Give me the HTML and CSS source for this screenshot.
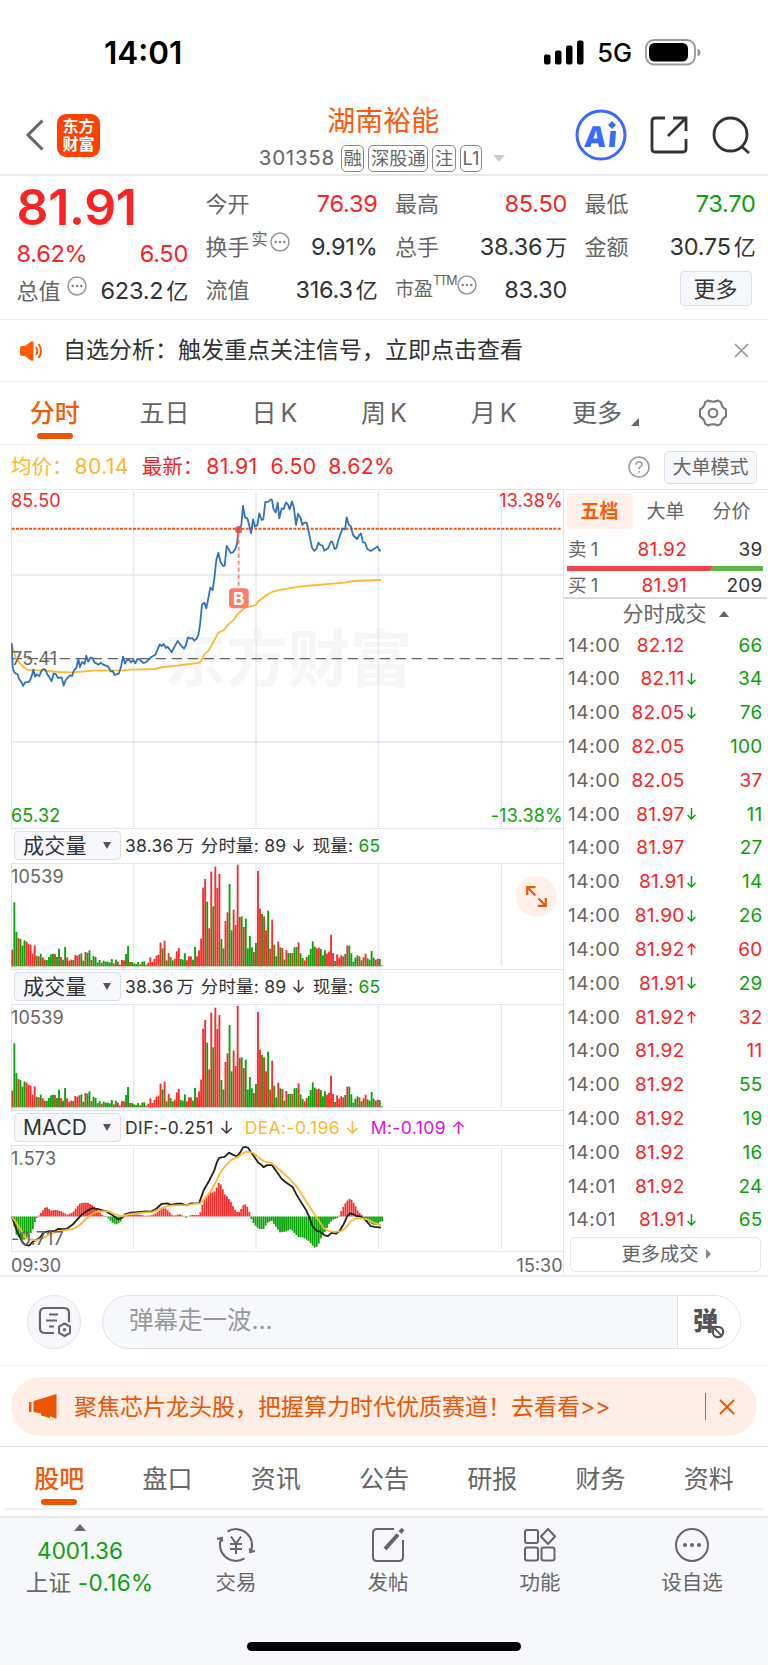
FILE: index.html
```html
<!DOCTYPE html>
<html lang="zh-CN">
<head>
    <meta charset="UTF-8">
    <meta name="viewport" content="width=device-width, initial-scale=1.0">
    <title>湖南裕能 301358</title>
    <link rel="stylesheet" href="styles.css">
</head>
<body>
    <div class="status-bar">
        <span class="clock">14:01</span>
        <div class="status-icons">
            <svg width="40" height="25" viewBox="0 0 40 25">
                <rect x="0" y="14.5" width="6.5" height="10" rx="2"/>
                <rect x="11" y="10.5" width="6.5" height="14" rx="2"/>
                <rect x="22" y="5.5" width="6.5" height="19" rx="2"/>
                <rect x="33" y="0.5" width="6.5" height="24" rx="2"/>
            </svg>
            <span class="network">5G</span>
            <svg width="56" height="27" viewBox="0 0 56 27">
                <rect x="1" y="1" width="49" height="24.500" rx="8" fill="none" stroke="#999" stroke-width="1.800"/>
                <rect x="4" y="4" width="39" height="18.500" rx="5.500"/>
                <path d="M52.500 9.500q3 1 3 4t-3 4z" fill="#999"/>
            </svg>
        </div>
    </div>

    <header class="header">
        <svg class="back" width="20" height="32" viewBox="0 0 20 32"><path d="M17.500 1.500 3 16l14.500 14.500" fill="none" stroke="#666" stroke-width="3"/></svg>
        <div class="logo"><span>东方</span><span>财富</span></div>
        <div class="title">
            <h1>湖南裕能</h1>
            <div class="subtitle">
                <span class="code">301358</span>
                <span class="tag">融</span><span class="tag">深股通</span><span class="tag">注</span><span class="tag">L1</span>
                <i class="tri-down"></i>
            </div>
        </div>
        <div class="ai">
            <svg width="52" height="52" viewBox="0 0 52 52">
                <circle cx="26" cy="26" r="24" fill="none" stroke="#3a6bff" stroke-width="3"/>
                <path d="M37 12l4 4-4 4-4-4z" fill="#3a6bff"/>
            </svg>
            <span class="ai-text">Aı</span>
        </div>
        <svg class="share" width="38" height="38" viewBox="0 0 38 38" fill="none" stroke="#333" stroke-width="2.800">
            <path d="M15 2H5Q2 2 2 5v28q0 3 3 3h28q3 0 3-3V23M23 2h13v13M36 2 18 20"/>
        </svg>
        <svg class="search" width="38" height="38" viewBox="0 0 38 38" fill="none" stroke="#333" stroke-width="2.800">
            <circle cx="18.500" cy="18.500" r="16.500"/><path d="M29 30l8 7"/>
        </svg>
    </header>

    <section class="quote">
        <div class="quote-col">
            <div class="big-price">81.91</div>
            <div class="row change red"><span>8.62%</span><span>6.50</span></div>
            <div class="row"><label>总值<svg class="dots up" viewBox="0 0 20 20"><use href="#dots"/></svg></label><span>623.2<em>亿</em></span></div>
        </div>
        <div class="quote-col">
            <div class="row"><label>今开</label><span class="red">76.39</span></div>
            <div class="row"><label>换手<sup>实</sup><svg class="dots" viewBox="0 0 20 20"><use href="#dots"/></svg></label><span>9.91%</span></div>
            <div class="row"><label>流值</label><span>316.3<em>亿</em></span></div>
        </div>
        <div class="quote-col">
            <div class="row"><label>最高</label><span class="red">85.50</span></div>
            <div class="row"><label>总手</label><span>38.36<em>万</em></span></div>
            <div class="row"><label class="pe">市盈<sup>TTM</sup><svg class="dots" viewBox="0 0 20 20"><use href="#dots"/></svg></label><span>83.30</span></div>
        </div>
        <div class="quote-col">
            <div class="row"><label>最低</label><span class="green">73.70</span></div>
            <div class="row"><label>金额</label><span>30.75<em>亿</em></span></div>
            <div class="row end"><button class="more-btn">更多</button></div>
        </div>
    </section>

    <section class="notice">
        <svg width="25" height="20" viewBox="0 0 25 20">
            <path d="M2 5h3l6-4.500q2.500-1 2.500 1.500v16q0 2.500-2.500 1.500L5 15H2q-2 0-2-2V7q0-2 2-2z" fill="#ff5a0a"/>
            <path d="M16 6q2.500 4 0 8M18.500 3q5 7 0 14" fill="none" stroke="#ff5a0a" stroke-width="2"/>
        </svg>
        <p>自选分析：触发重点关注信号，立即点击查看</p>
        <svg width="15" height="15" viewBox="0 0 15 15"><path d="M1 1l13 13M14 1L1 14" stroke="#999" stroke-width="1.700"/></svg>
    </section>

    <nav class="period-tabs">
        <a class="active">分时</a>
        <a>五日</a>
        <a>日<b>K</b></a>
        <a>周<b>K</b></a>
        <a>月<b>K</b></a>
        <a class="more">更多<i class="corner"></i></a>
        <a><svg width="30" height="30" viewBox="0 0 30 30" fill="none" stroke="#777" stroke-width="2">
            <path d="M10 2.500q5 2.500 10 0l3 1.800q.5 5 5 7.200v7q-4.500 2.200-5 7.200l-3 1.800q-5-2.500-10 0l-3-1.800q-.5-5-5-7.200v-7q4.500-2.200 5-7.200z" stroke-linejoin="round"/><circle cx="15" cy="15" r="4.300"/>
        </svg></a>
    </nav>

    <section class="info">
        <span class="yellow">均价：</span><span class="yellow v1">80.14</span>
        <span class="red">最新：</span><span class="red v2">81.91</span><span class="red v3">6.50</span><span class="red">8.62%</span>
        <svg class="help" width="22" height="22" viewBox="0 0 22 22" fill="none" stroke="#999" stroke-width="1.500">
            <circle cx="11" cy="11" r="10"/><path d="M8 8.800q0-3 3-3t3 2.600q0 1.500-1.700 2.500T11 13.500"/><path d="M11 15v1.800"/>
        </svg>
        <button class="mode-btn">大单模式</button>
    </section>

    <main class="trade">
        <div class="charts">
            <div class="price-chart">
                <svg viewBox="33 27 1656 1017" width="552" height="339">
                    <text class="watermark" x="492" y="606">东方财富</text>
                    <g class="grid">
                        <path d="M401 33V1040M768 33V1040M1135 33V1040M1504 33V1040M35 285H1689M35 786H1689"/>
                    </g>
                    <path d="M35 536H1689" class="mid-line"/>
                    <path d="M35 146H1686" class="last-line"/>
                    <polyline id="avg" class="line-avg"/>
                    <polyline id="price" class="line-price"/>
                    <path d="M716 158V325" class="mark-line"/>
                    <circle cx="716" cy="149" r="11" fill="#e8483c" opacity=".85"/>
                    <rect x="687" y="325" width="59" height="60" rx="12" fill="#ff7b6b"/>
                    <text class="mark" x="716.500" y="375">B</text>
                </svg>
                <span class="lab tl red">85.50</span>
                <span class="lab tr red">13.38%</span>
                <span class="lab ml">75.41</span>
                <span class="lab bl green">65.32</span>
                <span class="lab br green">-13.38%</span>
            </div>

            <div class="sub-head">
                <div class="select">成交量<i class="tri-down dark"></i></div>
                <span>38.36<em>万</em></span><span>分时量: 89 ↓</span><span>现量: <b class="green">65</b></span>
            </div>
            <div class="sub-chart">
                <svg class="volume" viewBox="33 116 1656 315" width="552" height="105"></svg>
                <span class="lab tl gray">10539</span>
                <div class="expand"><svg width="21" height="21" viewBox="0 0 21 21" fill="none" stroke="#f0590c" stroke-width="2.200">
                    <path d="M1.200 9V1.200H9.500M1.500 1.500l8 8M19.800 12v7.800h-8M19.500 19.500l-7-7"/>
                </svg></div>
            </div>

            <div class="sub-head">
                <div class="select">成交量<i class="tri-down dark"></i></div>
                <span>38.36<em>万</em></span><span>分时量: 89 ↓</span><span>现量: <b class="green">65</b></span>
            </div>
            <div class="sub-chart">
                <svg class="volume" viewBox="33 116 1656 315" width="552" height="105"></svg>
                <span class="lab tl gray">10539</span>
            </div>

            <div class="sub-head macd-head">
                <div class="select">MACD<i class="tri-down dark"></i></div>
                <span>DIF:-0.251 ↓</span><span class="yellow">DEA:-0.196 ↓</span><span class="purple">M:-0.109 ↑</span>
            </div>
            <div class="sub-chart">
                <svg class="macd" viewBox="30.300 119 1518.500 318" width="552" height="105" preserveAspectRatio="none">
                    <path class="grid" d="M367.500 126V432M704.500 126V432M1041.500 126V432M1379.500 126V432"/>
                    <g id="hist"></g>
                    <polyline id="dif" class="line-dif"/>
                    <polyline id="dea" class="line-dea"/>
                </svg>
                <span class="lab tl gray">1.573</span>
                <span class="lab bl gray">-0.717</span>
            </div>
            <div class="times"><span>09:30</span><span>15:30</span></div>
        </div>

        <aside class="book">
            <div class="book-tabs"><a class="active">五档</a><a>大单</a><a>分价</a></div>
            <div class="level sell"><span>卖<b>1</b></span><span class="red">81.92</span><span>39</span></div>
            <svg class="ratio" width="196" height="5" viewBox="0 0 196 5"><path d="M0 0H147L143 5H0z" fill="#ec4448"/><path d="M147 0h49v5h-53z" fill="#5cb946"/></svg>
            <div class="level buy"><span>买<b>1</b></span><span class="red">81.91</span><span>209</span></div>
            <div class="ticks-title">分时成交<i class="tri-up"></i></div>
            <div id="ticks"></div>
            <button class="more-ticks">更多成交<i class="tri-right"></i></button>
        </aside>
    </main>

    <section class="danmu">
        <div class="danmu-set">
            <svg width="34" height="32" viewBox="0 0 34 32" fill="none" stroke="#666" stroke-width="2.200">
                <path d="M16 27H7q-5 0-5-5V7q0-5 5-5h19q5 0 5 5v9"/><path d="M11 8.500h9M8 14.500h11M11 20.500h5"/>
                <path d="M26.500 17.500l5.500 3v6.500l-5.500 3-5.500-3v-6.500z" stroke-width="2"/><circle cx="26.500" cy="23.800" r="1" stroke-width="1.500"/>
            </svg>
        </div>
        <div class="danmu-input">
            <span class="placeholder">弹幕走一波...</span>
            <div class="danmu-toggle">
                <span>弹</span>
                <svg width="14" height="14" viewBox="0 0 14 14"><circle cx="7" cy="7" r="5.200" fill="#fff" stroke="#555" stroke-width="2.200"/><path d="M3.500 3.500l7 7" stroke="#555" stroke-width="2"/></svg>
            </div>
        </div>
    </section>

    <section class="banner-wrap">
        <div class="banner">
            <svg width="28" height="25" viewBox="0 0 28 25" fill="#ec5503"><path d="M0 8h2.500v10H0zM4.500 7 27.500 0v25L24 23.500l-3-1.500v2l-9-2.500v-2L4.500 18z"/></svg>
            <p>聚焦芯片龙头股，把握算力时代优质赛道！去看看&gt;&gt;</p>
            <i class="bar"></i>
            <svg width="16" height="16" viewBox="0 0 16 16"><path d="M1 1l14 14M15 1L1 15" stroke="#ec5503" stroke-width="1.800"/></svg>
        </div>
    </section>

    <nav class="content-tabs">
        <a class="active">股吧</a><a>盘口</a><a>资讯</a><a>公告</a><a>研报</a><a>财务</a><a>资料</a>
    </nav>

    <footer class="bottom-bar">
        <div class="index">
            <i class="tri-up"></i>
            <span class="value green">4001.36</span>
            <span class="name">上证 <b class="green">-0.16%</b></span>
        </div>
        <a>
            <svg width="40" height="36" viewBox="0 0 40 36" fill="none" stroke="#666" stroke-width="2">
                <path d="M11.500 4.600A16 16 0 0 1 34.500 25l4.500-1M34.500 25l-1-3.500M28.500 31.400A16 16 0 0 1 5.500 11L1 12M5.500 11l1 3.500"/>
                <path d="M15 9.500l5 7 5-7M20 16.500v10.500M14 17h12M14 22h12"/>
            </svg>交易
        </a>
        <a>
            <svg width="34" height="36" viewBox="0 0 34 36" fill="none" stroke="#666" stroke-width="2">
                <path d="M23 2H6Q2 2 2 6v24q0 4 4 4h22q4 0 4-4V13"/><path d="M14 22 27 7.500M29 5.500l3-3.500" stroke-width="4"/>
            </svg>发帖
        </a>
        <a>
            <svg width="34" height="36" viewBox="0 0 34 36" fill="none" stroke="#666" stroke-width="2">
                <rect x="2" y="3" width="13" height="13" rx="2"/><rect x="2" y="20.500" width="13" height="13" rx="2"/><rect x="18.500" y="20.500" width="13" height="13" rx="2"/><path d="M25 2l7 7.500-7 7.500-7-7.500z" stroke-linejoin="round"/>
            </svg>功能
        </a>
        <a>
            <svg width="36" height="36" viewBox="0 0 36 36" fill="#666">
                <circle cx="18" cy="18" r="16" fill="none" stroke="#666" stroke-width="2"/><circle cx="11" cy="18" r="2"/><circle cx="18" cy="18" r="2"/><circle cx="25" cy="18" r="2"/>
            </svg>设自选
        </a>
        <div class="home-indicator"></div>
    </footer>

    <svg class="defs" width="0" height="0">
        <symbol id="dots" viewBox="0 0 20 20"><circle cx="10" cy="10" r="9" fill="none" stroke="#999" stroke-width="1.500"/><g fill="#888"><circle cx="5.700" cy="10" r="1.300"/><circle cx="10" cy="10" r="1.300"/><circle cx="14.300" cy="10" r="1.300"/></g></symbol>
    </svg>
    <script src="script.js"></script>
</body>
</html>
```
FILE: styles.css
```css
* {
    box-sizing: border-box;
}
body {
    margin: 0;
    width: 768px;
    height: 1665px;
    overflow: hidden;
    background: #fff;
    color: #333;
    font-family: Inter, "Noto Sans CJK SC", sans-serif;
    font-size: 22px;
    line-height: 1;
}
p, h1 {
    margin: 0;
    font-weight: 400;
}
b, em, i {
    font-style: normal;
    font-weight: 400;
}
svg {
    display: block;
    flex-shrink: 0;
}
button {
    font: inherit;
    padding: 0;
    color: inherit;
}
.defs {
    position: absolute;
}
.red {
    color: #fb2323;
}
.green {
    color: #0aa30a;
}
.yellow {
    color: #ffb92e;
}
.purple {
    color: #e20ee6;
}
.gray {
    color: #666;
}

/* triangles */
.tri-down {
    border: 6.5px solid transparent;
    border-top: 7px solid #ccc;
    border-bottom: 0;
}
.tri-down.dark {
    border-width: 7px 4px 0;
    border-top-color: #555;
}
.tri-up {
    border: 5px solid transparent;
    border-bottom: 6px solid #666;
    border-top: 0;
}
.tri-right {
    border: 5px solid transparent;
    border-left: 5px solid #888;
    border-right: 0;
}

/* status bar and header */
.status-bar {
    height: 96px;
    padding: 9px 67px 0 104px;
    display: flex;
    justify-content: space-between;
    align-items: center;
}
.clock {
    font-size: 31.5px;
    font-weight: 600;
    color: #000;
}
.status-icons {
    display: flex;
    align-items: center;
    gap: 13px;
}
.network {
    font-size: 25.5px;
    font-weight: 500;
    color: #000;
}
.header {
    height: 80px;
    padding: 0 18px 0 25px;
    display: flex;
    align-items: center;
    border-bottom: 2px solid #eaeaea;
}
.logo {
    width: 43px;
    height: 43px;
    margin-left: 12px;
    border-radius: 9px;
    background: #ff4200;
    color: #fff;
    font-size: 16px;
    font-weight: 700;
    display: flex;
    flex-direction: column;
    align-items: center;
    justify-content: center;
    gap: 2px;
}
.title {
    width: 250px;
    margin-left: 159px;
    height: 76px;
}
.title h1 {
    color: #ff5a0a;
    font-size: 28px;
    width: 249px;
    text-align: center;
    margin-top: 9.5px;
}
.subtitle {
    display: flex;
    align-items: center;
    margin-top: 10px;
    color: #666;
}
.code {
    font-size: 20.5px;
    letter-spacing: 0.7px;
    width: 82px;
}
.tag {
    height: 27px;
    line-height: 24px;
    border: 1.5px solid #888;
    border-radius: 5px;
    font-size: 18.3px;
    padding: 0 1.6px;
    margin-right: 4px;
    white-space: nowrap;
}
.subtitle .tri-down {
    margin-left: 7px;
}
.ai {
    position: relative;
    margin-left: 67px;
}
.ai-text {
    position: absolute;
    left: 10px;
    top: 11px;
    font-family: "Open Sans", Inter, sans-serif;
    font-size: 29px;
    line-height: 32px;
    font-weight: 800;
    color: #3a6bff;
    letter-spacing: 2px;
    transform: skewX(-5deg);
}
.share {
    margin-left: 23px;
}
.search {
    margin-left: 24px;
}

/* quote panel */
.quote {
    height: 144px;
    padding: 6px 12px 0 16.5px;
    display: grid;
    grid-template-columns: 171.5px 172px 172px 171px;
    column-gap: 17.5px;
    border-bottom: 1.5px solid #eee;
}
.row {
    height: 43px;
    display: flex;
    justify-content: space-between;
    align-items: center;
    font-size: 23.5px;
    letter-spacing: -0.25px;
    white-space: nowrap;
}
.row label {
    color: #666;
    font-size: 22px;
    letter-spacing: 0;
    display: flex;
    align-items: center;
}
.row em {
    font-size: 22px;
    margin-left: 3px;
}
.row sup {
    font-size: 16px;
    align-self: flex-start;
    margin-top: -5px;
    margin-left: 2px;
}
.row .pe {
    font-size: 19px;
}
.pe sup {
    font-size: 12.5px;
    letter-spacing: -1.5px;
    margin-left: 0;
}
.pe .dots {
    margin-left: 1px;
}
.dots {
    width: 20px;
    height: 20px;
    margin: -10px 0 0 2px;
}
.dots.up {
    margin-left: 6px;
}
.big-price {
    height: 51px;
    line-height: 51px;
    font-size: 50px;
    font-weight: 600;
    color: #fb2323;
    letter-spacing: -0.3px;
}
.row.change {
    height: 36px;
    padding-top: 5px;
}
.row.end {
    justify-content: flex-end;
    padding-right: 4px;
}
.more-btn {
    width: 72px;
    height: 35px;
    margin-top: -2px;
    background: #f7f8fb;
    border: 1.5px solid #dcdfe6;
    border-radius: 4px;
    font-size: 22px;
}

/* notice */
.notice {
    height: 62px;
    padding: 0 19px 0 20px;
    display: flex;
    align-items: center;
    border-bottom: 1.5px solid #eee;
}
.notice p {
    flex: 1;
    margin-left: 18px;
    font-size: 23px;
}

/* tabs */
.period-tabs, .content-tabs {
    display: grid;
    grid-template-columns: repeat(7, 1fr);
    color: #666;
    font-size: 25px;
}
.period-tabs {
    height: 63px;
    border-bottom: 1.5px solid #eee;
}
.period-tabs a, .content-tabs a {
    position: relative;
    display: flex;
    align-items: center;
    justify-content: center;
}
.period-tabs .more {
    padding-left: 4px;
}
.period-tabs b {
    margin-left: 4px;
}
.period-tabs .active, .content-tabs .active {
    color: #f55a06;
    font-weight: 500;
}
.period-tabs .active::after, .content-tabs .active::after {
    content: "";
    position: absolute;
    bottom: 5px;
    left: 50%;
    width: 36px;
    height: 6px;
    margin-left: -18px;
    border-radius: 3px;
    background: #ec5503;
}
.corner {
    margin: 18px 0 0 9px;
    border-left: 8px solid transparent;
    border-bottom: 8px solid #666;
}

/* info row */
.info {
    height: 44px;
    padding: 0 11px;
    display: flex;
    align-items: center;
    font-size: 20.5px;
    color: #666;
}
.info .v1, .info .v2, .info .v3, .info .v3 + span {
    font-size: 21.2px;
    letter-spacing: 0.35px;
}
.info .v1 {
    margin: 0 13px 0 2px;
}
.info .v2 {
    margin: 0 13px 0 3px;
}
.info .v3 {
    margin-right: 12px;
}
.help {
    margin-left: auto;
}
.mode-btn {
    width: 93px;
    height: 33px;
    margin-left: 14px;
    background: #f7f8fb;
    border: 1.5px solid #dcdfe6;
    border-radius: 5px;
    font-size: 19px;
}

/* charts */
.trade {
    height: 788px;
    display: flex;
    border-bottom: 2px solid #eee;
}
.charts {
    width: 563.5px;
    padding-left: 11px;
    border-right: 1.5px solid #e3e6ee;
}
.price-chart, .sub-chart {
    position: relative;
    border: 1.5px solid #e3e6ee;
    border-right: 0;
}
.price-chart {
    height: 339.5px;
}
.price-chart svg, .sub-chart > svg {
    margin: -1px 0 0 -1.5px;
}
.sub-chart {
    height: 107px;
}
.grid {
    fill: none;
    stroke: #e3e6ef;
    stroke-width: 4;
}
.macd .grid {
    stroke-width: 3;
}
.watermark {
    font-size: 186px;
    font-weight: 700;
    fill: #f6f6f6;
}
.mid-line {
    stroke: #666;
    stroke-width: 4;
    stroke-dasharray: 31 17;
}
.last-line {
    stroke: #f0590c;
    stroke-width: 6;
    stroke-dasharray: 9 4;
}
.line-avg, .line-price, .line-dif, .line-dea {
    fill: none;
    stroke-width: 1.8px;
    stroke-linejoin: round;
    vector-effect: non-scaling-stroke;
}
.line-avg, .line-dea {
    stroke: #ffb92e;
}
.line-price {
    stroke: #2f74c0;
}
.line-dif {
    stroke: #222;
}
.mark-line {
    stroke: #ff7b6b;
    stroke-width: 5;
    stroke-dasharray: 12 9;
}
.mark {
    font-size: 53px;
    font-weight: 700;
    fill: #fff;
    text-anchor: middle;
}
.lab {
    position: absolute;
    font-size: 18px;
    letter-spacing: 0.2px;
}
.tl {
    left: -1px;
    top: 3px;
}
.tr {
    right: -0.5px;
    top: 2px;
}
.price-chart .tl {
    top: 2px;
}
.sub-chart .tl {
    top: 4px;
}
.ml {
    left: 0;
    top: 159.5px;
    color: #666;
}
.bl {
    left: -1px;
    bottom: 3px;
}
.br {
    right: -0.5px;
    bottom: 3px;
}
.sub-head {
    height: 34px;
    padding-left: 3px;
    display: flex;
    align-items: center;
    gap: 6.5px;
    font-size: 17.5px;
    letter-spacing: 0.2px;
    white-space: nowrap;
}
.sub-head em {
    margin-left: 3px;
}
.macd-head {
    gap: 10.5px;
    letter-spacing: 0.4px;
}
.select {
    width: 107px;
    height: 29px;
    margin-right: -2.5px;
    padding: 0 9px 1px 8px;
    display: flex;
    align-items: center;
    justify-content: space-between;
    background: #f7f8fb;
    border: 1.5px solid #dcdfe6;
    border-radius: 4px;
    font-size: 21px;
}
.macd-head .select {
    margin-right: -6.5px;
    letter-spacing: 0.2px;
}
.expand {
    position: absolute;
    right: 6px;
    top: 12px;
    width: 41px;
    height: 41px;
    border-radius: 50%;
    background: #fff0e9;
    display: flex;
    align-items: center;
    justify-content: center;
}
.times {
    height: 26px;
    padding-top: 3px;
    display: flex;
    justify-content: space-between;
    align-items: center;
    font-size: 18px;
    color: #666;
}

/* order book */
.book {
    flex: 1;
    padding: 0 1px 0 0;
    border-top: 1.5px solid #e3e6ee;
}
.book-tabs {
    height: 41px;
    padding: 3px 2px 2px 3px;
    display: grid;
    grid-template-columns: repeat(3, 66px);
    color: #666;
    font-size: 19px;
}
.book-tabs a {
    display: flex;
    align-items: center;
    justify-content: center;
    border-radius: 5px;
}
.book-tabs .active {
    background: #fff0e9;
    color: #ff5a0a;
    font-weight: 700;
}
.level, .tick {
    display: grid;
    grid-template-columns: 60px 56.5px 13px 1fr;
    align-items: center;
    padding: 0 4.5px 0 4.5px;
    font-size: 19px;
    letter-spacing: 0.25px;
}
.level {
    grid-template-columns: 60px 59px 1fr;
    height: 34px;
}
.level.sell {
    height: 35px;
    padding-top: 1px;
}
.level b {
    margin-left: 4px;
}
.level span:first-child {
    color: #666;
    font-size: 18.5px;
}
.level .red, .level span:last-child, .tick .p, .tick .q {
    text-align: right;
    justify-self: end;
}
.level.buy {
    height: 28px;
    padding-top: 2px;
    border-bottom: 2px solid #d7dae1;
}
.ratio {
    margin-left: 3.5px;
}
.ticks-title {
    height: 30px;
    display: flex;
    align-items: center;
    padding: 0 0 1px 59px;
    color: #666;
    font-size: 21px;
}
.ticks-title .tri-up {
    margin-left: 12px;
}
.tick {
    height: 33.82px;
}
.tick:first-child {
    height: 33px;
}
.tick .t {
    color: #666;
    letter-spacing: 0.6px;
}
.tick .arr {
    display: block;
    margin-left: 2.5px;
}
.more-ticks {
    width: 191px;
    height: 35px;
    margin: 0 0 0 6px;
    padding-left: 2px;
    display: flex;
    align-items: center;
    justify-content: center;
    gap: 7px;
    background: #fff;
    border: 1.5px solid #e3e6ea;
    border-radius: 5px;
    color: #666;
    font-size: 19.3px;
}

/* danmu */
.danmu {
    height: 89px;
    padding: 1px 27px 0;
    display: flex;
    align-items: center;
    justify-content: space-between;
    border-bottom: 1.5px solid #f2f2f2;
}
.danmu-set {
    width: 54px;
    height: 54px;
    border-radius: 50%;
    border: 1.5px solid #e3e4e9;
    background: #f7f8fb;
    display: flex;
    align-items: center;
    justify-content: center;
    padding-left: 2px;
}
.danmu-input {
    width: 639px;
    height: 54px;
    border-radius: 27px;
    border: 1.5px solid #dfe1e8;
    background: #f7f8fb;
    display: flex;
    overflow: hidden;
}
.placeholder {
    flex: 1;
    padding: 12px 0 0 26px;
    font-size: 24.5px;
    color: #999;
}
.danmu-toggle {
    position: relative;
    width: 63px;
    background: #fff;
    border-left: 1.5px solid #dfe1e8;
    padding: 13px 0 0 15px;
    font-size: 25px;
    font-weight: 900;
    color: #555;
}
.danmu-toggle svg {
    position: absolute;
    left: 33px;
    top: 29px;
}

/* banner */
.banner-wrap {
    height: 81px;
    padding: 11px 11px 0;
    border-bottom: 1.5px solid #e3e5ea;
}
.banner {
    height: 59px;
    padding: 0 22px 0 18px;
    border-radius: 30px;
    background: #ffeee5;
    color: #ec5503;
    display: flex;
    align-items: center;
}
.banner p {
    flex: 1;
    margin-left: 17px;
    padding-top: 1px;
    font-size: 23px;
}
.bar {
    width: 1.5px;
    height: 27px;
    margin-right: 13px;
    background: #ec5503;
}

.content-tabs {
    height: 63px;
    margin: 0 5px 6px;
    border-bottom: 2px solid #f0f0f0;
}
.content-tabs a {
    padding-top: 4px;
}
.content-tabs .active::after {
    bottom: 3px;
}

/* bottom bar */
.bottom-bar {
    position: relative;
    height: 149px;
    background: #f7f8fb;
    border-top: 2px solid #e6e7ea;
    display: grid;
    grid-template-columns: 160px repeat(4, 152px);
    color: #666;
    font-size: 20.5px;
}
.bottom-bar a {
    display: flex;
    flex-direction: column;
    align-items: center;
    gap: 10px;
    padding-top: 9px;
}
.index {
    width: 160px;
    display: flex;
    flex-direction: column;
    align-items: center;
    padding-top: 6px;
    font-size: 22.5px;
    white-space: nowrap;
}
.index .tri-up {
    border-width: 0 6.5px 7px;
}
.index .value {
    margin: 9px 0;
}
.index .name {
    margin-left: 19px;
    letter-spacing: 0.3px;
}
.home-indicator {
    position: absolute;
    left: 247px;
    bottom: 14px;
    width: 274px;
    height: 9px;
    border-radius: 5px;
    background: #000;
}
```
FILE: script.js
```js
// minute volumes, r = up, g = down
const volumes = `r50 g192 g103 r85 g82 g62 g78 r74 r68 r65 r38 r63 g32 r30 g38 r27 r20 g19 g28 g36 g38 r37 g28 g53 r28 g20 g58 r27 r17 r20 g19 r34 r32 r36 g39 g17 r43 g41 g48 r19 g31 g28 g12 g19 r11 g17 g14 g14 g12 g22 r9 g20 r14 r5 r19 r18 g37 g61 r13 g13
g9 g7 g13 r6 g14 g15 r5 r11 r27 r13 r22 r32 r35 r71 g54 r77 g18 r40 g28 g18 r23 r45 r55 g22 g20 g39 r18 r30 r30 g20 g58 r30 r48 r83 r236 r262 g194 r114 r284 g180 r299 r235 r277 g82 g54 r136 r162 g247 g108 r170 r124 r305 r148 g150 r118 g143 g54 g91 g57
r43 g70 r286 r173 g157 r150 r108 g167 r53 r140 g65 g30 r74 g57 r55 g20 r49 g40 g40 r40 g57 g58 r72 g39 g25 r18 r28 g34 g52 g75 g59 r54 r56 g52 g33 g48 r38 r44 r95 r40 g16 r36 r26 r33 r30 g37 r62 g62 g39 g14 g26 g33 r30 g18 r27 r38 g24 g20 g46 g26 r20 r23 g22 g3`.split(/\s+/);

const price = "35,490 38,560 42,575 46,580 52,582 58,598 65,607 69,618 75,607 86,606 92,597 97,582 100,568 105,590 110,583 118,588 125,571 131,567 137,570 142,583 148,592 155,604 161,580 168,583 174,594 185,592 191,617 197,600 204,592 210,586 216,588 222,571 229,564 235,537 240,561 246,546 254,552 259,527 265,545 271,533 277,534 284,548 296,554 302,548 308,553 325,560 332,574 338,573 344,585 357,580 363,560 369,530 375,551 381,540 388,540 393,547 400,540 406,550 412,537 418,538 430,549 437,547 445,540 455,530 466,524 473,508 479,493 485,498 491,492 498,504 503,500 515,517 522,503 533,483 541,494 552,506 558,495 564,472 571,476 577,474 583,482 590,476 595,465 600,435 606,374 613,368 619,385 626,350 631,323 638,330 643,295 649,240 655,218 662,247 669,258 674,257 680,198 686,208 692,219 699,217 706,207 711,192 716,148 724,135 729,78 735,112 742,115 748,137 753,160 759,118 765,140 772,135 778,100 785,120 790,118 796,66 805,65 813,58 816,60 820,85 827,98 833,68 838,115 845,85 851,87 858,67 864,74 869,88 876,64 882,85 888,135 894,102 902,114 907,135 913,128 920,128 926,155 936,203 943,213 950,205 955,188 961,195 968,197 973,212 985,204 992,186 997,185 1004,207 1009,204 1016,178 1022,160 1028,146 1035,148 1040,112 1046,133 1053,140 1059,165 1071,177 1077,167 1083,160 1089,187 1095,188 1102,207 1112,213 1118,210 1132,199 1138,211 1143,212";
const avg = "35,490 40,510 48,535 60,550 72,562 82,569 110,571 145,573 180,576 215,577 245,575 280,572 370,571 395,569 465,567 490,561 530,557 570,552 598,548 603,543 613,523 625,512 640,487 655,458 672,450 685,433 703,418 712,403 735,383 752,379 767,375 775,364 800,345 818,335 845,329 895,320 950,315 1035,308 1060,303 1143,300";
const dif = "33,337 45,375 60,410 68,421 80,424 90,412 98,407 108,402 120,384 135,380 150,380 160,373 172,374 185,372 200,360 212,345 225,330 240,318 255,310 270,313 290,319 310,332 325,344 335,340 345,328 360,324 380,322 400,320 415,321 430,312 445,297 460,296 470,300 485,297 500,297 512,302 525,296 548,295 560,257 575,228 590,195 597,170 603,158 618,155 630,142 643,150 652,153 662,140 668,127 675,125 683,128 690,140 700,155 710,172 718,178 725,186 735,180 748,180 760,198 775,222 790,235 805,246 815,268 830,295 842,316 850,335 860,365 870,378 880,381 892,392 902,395 912,385 925,387 935,378 945,360 955,335 963,326 975,330 980,334 990,335 1000,340 1010,352 1020,365 1030,367 1048,369";
const dea = "33,337 45,355 60,380 70,400 80,404 100,408 120,400 140,388 160,380 185,376 200,374 215,365 230,350 245,335 260,323 280,319 300,320 315,328 335,335 350,330 375,326 400,323 420,322 440,312 460,304 480,302 510,301 530,298 550,296 565,280 580,258 592,235 605,205 618,185 635,165 655,155 670,143 680,139 695,142 710,155 725,168 745,173 760,185 775,200 795,220 815,243 830,268 845,295 860,320 875,345 890,370 905,380 920,382 940,380 955,365 965,350 980,341 1000,341 1015,346 1030,355 1048,362";
const hist = "33,0 45,-55 60,-72 75,-68 90,-40 98,-8 105,0 112,10 125,28 130,28 140,18 155,20 170,15 185,5 200,12 218,38 225,41 240,42 255,34 270,18 280,6 290,0 297,-5 310,-20 322,-24 335,-12 340,0 350,5 380,6 400,2 415,3 430,10 445,24 455,25 465,15 475,2 485,4 495,7 503,2 512,-4 520,2 530,5 545,4 550,8 555,30 565,60 580,72 590,75 597,90 603,105 610,92 617,68 625,60 635,45 645,22 655,10 665,25 672,40 680,30 688,8 692,-10 700,-25 712,-38 725,-38 735,-20 747,-12 755,-25 770,-48 785,-46 800,-38 810,-50 820,-62 835,-64 850,-75 860,-88 868,-97 876,-85 885,-60 895,-45 905,-22 915,-10 928,-5 933,2 940,20 950,40 960,54 966,52 975,38 985,15 995,5 1000,-3 1010,-12 1025,-25 1035,-25 1045,-16 1056,-14".split(" ").map(p => p.split(",").map(Number));

const ticks = [
    ["14:00", "82.12", "", 66, "g"], ["14:00", "82.11", "d", 34, "g"], ["14:00", "82.05", "d", 76, "g"],
    ["14:00", "82.05", "", 100, "g"], ["14:00", "82.05", "", 37, "r"], ["14:00", "81.97", "d", 11, "g"],
    ["14:00", "81.97", "", 27, "g"], ["14:00", "81.91", "d", 14, "g"], ["14:00", "81.90", "d", 26, "g"],
    ["14:00", "81.92", "u", 60, "r"], ["14:00", "81.91", "d", 29, "g"], ["14:00", "81.92", "u", 32, "r"],
    ["14:00", "81.92", "", 11, "r"], ["14:00", "81.92", "", 55, "g"], ["14:00", "81.92", "", 19, "g"],
    ["14:00", "81.92", "", 16, "g"], ["14:01", "81.92", "", 24, "g"], ["14:01", "81.91", "d", 65, "g"]
];

const RED = "#fb2b2b";
const GREEN = "#0aa30a";

for (const [id, points] of Object.entries({ price, avg, dif, dea })) {
    document.getElementById(id).setAttribute("points", points);
}

const bars = volumes.map((v, i) => {
    const h = +v.slice(1);
    const x = 34.2 + i * 6.09;
    return `<rect x="${x.toFixed(2)}" y="${426 - h}" width="5.6" height="${h}" fill="${v[0] === "r" ? RED : GREEN}"/>`;
}).join("");
document.querySelectorAll(".volume").forEach(svg => {
    svg.innerHTML = '<path class="grid" d="M401 121V426M768 121V426M1135 121V426M1504 121V426"/>' + bars;
});

// height of the MACD bar at x
function histAt(x) {
    const i = hist.findIndex(p => p[0] >= x);
    if (i < 1) return 0;
    const [x0, y0] = hist[i - 1];
    const [x1, y1] = hist[i];
    return y0 + (y1 - y0) * (x - x0) / (x1 - x0);
}
let histBars = "";
for (let x = 34; x < 1056; x += 5.62) {
    const h = histAt(x);
    const y = h > 0 ? 335.5 - h : 335.5;
    histBars += `<rect x="${(x - 2.4).toFixed(2)}" y="${y.toFixed(1)}" width="4.9" height="${Math.max(Math.abs(h), 1).toFixed(1)}" fill="${h > 0 ? RED : GREEN}"/>`;
}
document.getElementById("hist").innerHTML = histBars;

const arrows = {
    d: '<svg class="arr" width="9" height="12" viewBox="0 0 9 12" fill="none" stroke="#0aa30a" stroke-width="1.5"><path d="M4.5 0v11M.6 7l3.900 4 3.900-4"/></svg>',
    u: '<svg class="arr" width="9" height="12" viewBox="0 0 9 12" fill="none" stroke="#fb2323" stroke-width="1.5"><path d="M4.500 12V1M.6 5l3.900-4 3.900 4"/></svg>',
    "": "<i></i>"
};
document.getElementById("ticks").innerHTML = ticks.map(([t, p, dir, q, c]) =>
    `<div class="tick"><span class="t">${t}</span><span class="p red">${p}</span>${arrows[dir]}<span class="q ${c === "r" ? "red" : "green"}">${q}</span></div>`
).join("");
```
